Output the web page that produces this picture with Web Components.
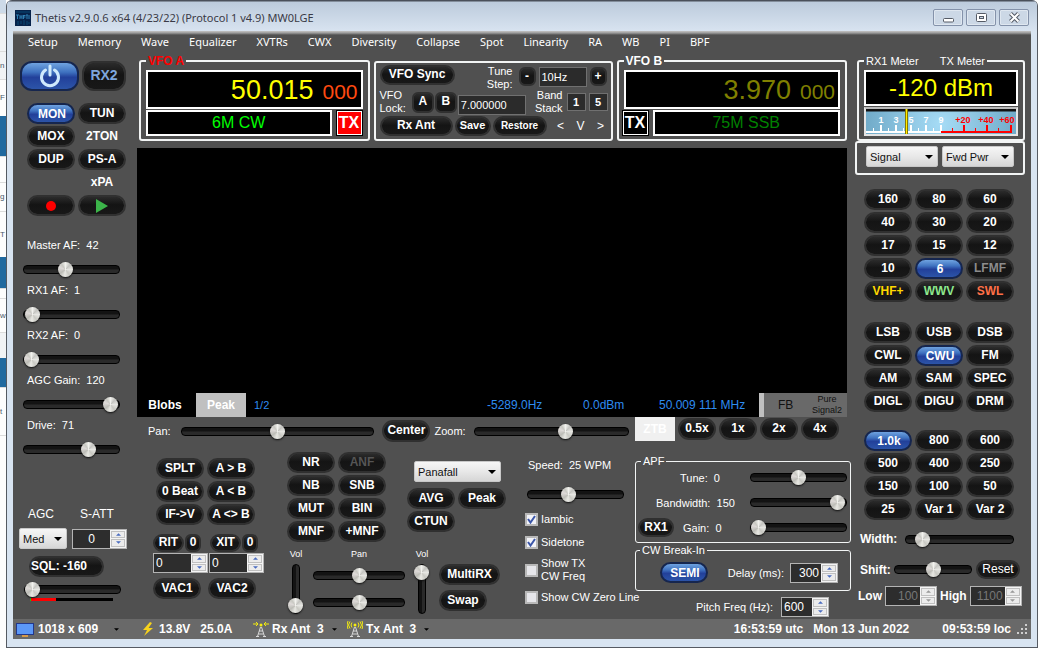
<!DOCTYPE html>
<html lang="en">
<head>
<meta charset="utf-8">
<title>Thetis v2.9.0.6 x64</title>
<style>
  html, body { margin: 0; }
  body { background: #fff; font-family: "Liberation Sans", Arial, sans-serif; font-size: 11px; }
</style>
</head>
<body>
<thetis-app></thetis-app>
<script>
const BASE = `
  *, *::before, *::after { box-sizing: border-box; }
  :host { box-sizing: border-box; display: block; color: #fff; }
  :host([hidden]) { display: none; }
  button, input, select { font: inherit; color: inherit; margin: 0; }
  .row { display: flex; align-items: center; }
`;
function define(name, css, markup) {
  customElements.define(name, class extends HTMLElement {
    constructor() {
      super();
      this.attachShadow({ mode: 'open' });
    }
    connectedCallback() {
      if (this.shadowRoot.childNodes.length) return;
      const t = document.createElement('template');
      t.innerHTML = `<style>${BASE}${css}</style>${markup(name => this.getAttribute(name) ?? '')}`;
      this.shadowRoot.append(t.content.cloneNode(true));
    }
  });
}

/* ---------- small controls ---------- */

define('pill-button', `
  :host { width: 48px; height: 21px; flex: none; font-weight: bold; font-size: 12px; }
  button { display: flex; align-items: center; justify-content: center; width: 100%; height: 100%;
    padding: 0 0 2px; border: 2px solid #303030; border-radius: 12px; white-space: nowrap;
    background: linear-gradient(#2b2b2b, #141414 45%, #181818); background-clip: padding-box; background-color: #141414; }
  :host([on]) button { padding: 0 0 0 2px; border: 2px solid #16264e;
    background: linear-gradient(#6fa3e0, #3f72c0 35%, #22409a 55%, #2c54a8); }
  :host([flat]) button { background: none; border-color: transparent; }
  :host([square]) button { border-radius: 6px; }
  :host([start]) button { justify-content: flex-start; }
`, a => `<button type="button"${a('label') ? ` aria-label="${a('label')}"` : ''}><slot></slot></button>`);

define('range-slider', `
  :host { height: 18px; width: 97px; flex: none; }
  input { appearance: none; -webkit-appearance: none; display: block; width: 100%; height: 100%; background: none; }
  input::-webkit-slider-runnable-track { height: 9px; border: 1px solid #000; border-radius: 4px;
    background: linear-gradient(#131313 45%, #2a2a2a 55%); }
  input::-webkit-slider-thumb { -webkit-appearance: none; width: 15px; height: 15px; margin-top: -4px; border-radius: 50%;
    background: conic-gradient(#f2f2ee, #c4c4c0 12%, #e6e6e2 25%, #c8c8c2 40%, #e9e9e4 52%, #bcbcb6 65%, #dedad8 80%, #c8c8c2 90%, #f2f2ee);
    box-shadow: 0 1px 2px #111; }
  :host([vertical]) { width: 16px; height: 50px; }
  :host([vertical]) input { writing-mode: vertical-lr; direction: rtl; }
  :host([vertical]) input::-webkit-slider-runnable-track { height: auto; width: 8px; background: linear-gradient(90deg, #131313 45%, #2a2a2a 55%); }
  :host([vertical]) input::-webkit-slider-thumb { margin-top: 0; margin-left: -5px; }
`, a => `<input type="range" min="0" max="100" value="${a('value')}" aria-label="${a('label')}">`);

define('labeled-slider', `
  :host { display: flex; flex-direction: column; gap: 8px; width: 97px; }
  label { height: 14px; line-height: 14px; padding-left: var(--indent, 4px); white-space: pre; }
`, a => `<label>${a('label')}  ${a('reading')}</label><range-slider label="${a('label')}" value="${a('value')}"></range-slider>`);

define('number-box', `
  :host { display: flex; height: 20px; width: 55px; flex: none; border: 1px solid #b4b4b4; background: #2d2d2d; font-size: 12px; }
  input { flex: 1; min-width: 0; border: 0; padding: 0 2px 0 2px; background: none; appearance: textfield; -moz-appearance: textfield; text-align: var(--align, left); }
  input::-webkit-inner-spin-button { -webkit-appearance: none; display: none; }
  .spin { display: grid; grid-template-rows: 1fr 1fr; gap: 1px; width: 16px; padding: 1px; background: #f4f4f4; }
  .spin button { display: flex; align-items: center; justify-content: center; border: 1px solid #c0c0c0; background: #ececec; padding: 0; min-height: 0; color: #4a6cc0; }
  :host([disabled]) input { color: #777; }
  :host([disabled]) .spin button { color: #999; }
  svg { display: block; width: 5px; height: 3px; fill: currentColor; }
`, a => `<input type="number" value="${a('value')}" aria-label="${a('label')}">
  <span class="spin"><button type="button" aria-label="Increase"><svg viewBox="0 0 6 3"><path d="M0 3 3 0l3 3z"/></svg></button>
  <button type="button" aria-label="Decrease"><svg viewBox="0 0 6 3"><path d="M0 0h6L3 3z"/></svg></button></span>`);

define('drop-select', `
  :host { position: relative; width: 72px; height: 21px; flex: none; color: #111; }
  select { appearance: none; -webkit-appearance: none; width: 100%; height: 100%; padding: 0 14px 0 3px; border: 1px solid #c8c8c8; border-radius: 2px;
    background: linear-gradient(#f6f6f6, #e8e8e8 50%, #d6d6d6); }
  svg { position: absolute; right: 5px; top: 9px; width: 8px; height: 4px; pointer-events: none; }
`, a => `<select aria-label="${a('label')}"><option>${a('value')}</option></select><svg viewBox="0 0 8 4"><path d="M0 0h8L4 4z"/></svg>`);

define('tick-box', `
  label { display: flex; align-items: center; gap: 3px; line-height: 13px; white-space: pre; }
  input { appearance: none; -webkit-appearance: none; flex: none; width: 13px; height: 13px; border: 2px solid #b8b8b8; outline: 0;
    background: #e6e6ea; }
  input:checked { background: #f2f3f8; }
  .box { position: relative; display: flex; }
  svg { position: absolute; inset: 2px; width: 9px; height: 9px; pointer-events: none; }
`, a => `<label><span class="box"><input type="checkbox"${a('ticked') ? ' checked' : ''}>${a('ticked')
    ? '<svg viewBox="0 0 9 9" fill="none" stroke="#3a55a8" stroke-width="2"><path d="M1 4l2.500 3.500L8 1"/></svg>' : ''}</span><slot></slot></label>`);

define('group-box', `
  fieldset { height: 100%; margin: 0; min-width: 0; padding: var(--pad, 3px 5px 3px); border: var(--bw, 2px) solid #f2f4f4; border-radius: 3px; }
  legend { height: 12px; line-height: 12px; margin-left: var(--lx, 0); padding: 0 2px; color: var(--lc, #fff); font-size: 11px; white-space: pre; }
  :host([strong]) legend { font-weight: bold; font-size: 12px; }
`, a => `<fieldset>${a('legend') ? `<legend>${a('legend')}</legend>` : ''}<slot></slot></fieldset>`);

/* ---------- window frame ---------- */

define('page-behind', `
  :host { display: flex; flex-direction: column; width: 6px; flex: none; background: #fdfdfd; font-size: 8px; color: #4a5a6a; }
  div { flex: none; display: flex; align-items: center; line-height: 12px; border-top: 1px solid #dcdcdc; }
  .head { background: #cddae8; border: 0; } .pale { background: #f1f3f5; } .bar { background: #20699f; color: #fff; border: 0; }
`, () => [['head', 13, ''], ['pale', 38, ''], ['pale', 28, 'n'], ['', 37, 'F'], ['bar', 40, ''], ['', 26, ''], ['', 29, 'g'],
    ['', 46, 'T'], ['bar', 31, ''], ['', 10, ''], ['', 34, 'w'], ['pale', 26, ''], ['bar', 29, ''], ['', 48, 't'], ['', 200, '']]
    .map(([c, h, t]) => `<div class="${c}" style="height:${h}px" aria-hidden="true">${t}</div>`).join(''));

define('title-bar', `
  :host { display: flex; align-items: center; height: 31px; padding: 4px 8px 0 8px; gap: 4px; font-size: 11px; color: #3a3a46; font-family: "Noto Sans", "Open Sans", sans-serif;
    background: linear-gradient(#4a505a 1px, #bccbdc 2px, #d8e3f0); }
  h1 { flex: 1; margin: 0; font: inherit; white-space: nowrap; }
  .icon { width: 16px; height: 16px; flex: none; }
  .buttons { display: flex; gap: 3px; }
  .buttons button { width: 30px; height: 17px; padding: 0; border: 1px solid #8492aa; border-radius: 2px; background: #ccd8e6; display: flex; align-items: center; justify-content: center; box-shadow: inset 0 0 0 1px #dfe7f0; }
  .buttons svg { width: 13px; height: 11px; }
`, () => `<svg class="icon" viewBox="0 0 16 16"><rect width="16" height="16" fill="#06224a"/>
    <g fill="none" stroke="#2f80b4"><path d="M1 5h3M2.500 5v4M5 5v4M7 5v4M5 7h2M8.500 5v4M8.500 5.500h2M8.500 7h2M11 5h2M12 5v4M14 5v4"/></g>
    <g fill="none" stroke="#0d5a86" stroke-width=".7"><path d="M1 2h14M3 11v4M6 11v3M9 10v5M12 11v4M14 12v2"/></g></svg>
  <h1>Thetis v2.9.0.6 x64 (4/23/22) (Protocol 1 v4.9) MW0LGE</h1>
  <div class="buttons">
    <button type="button" aria-label="Minimize"><svg viewBox="0 0 13 11"><rect x="1.500" y="6.500" width="10" height="3.500" rx="1" fill="#fff" stroke="#555b66"/></svg></button>
    <button type="button" aria-label="Maximize"><svg viewBox="0 0 13 11"><rect x="1.500" y="1.500" width="10" height="8" rx="1" fill="#fff" stroke="#555b66"/><rect x="4.500" y="4.500" width="4" height="2" fill="#ccd8e6" stroke="#555b66"/></svg></button>
    <button type="button" aria-label="Close"><svg viewBox="0 0 13 11"><path d="M2.500 1.500 10.500 9.500M10.500 1.500 2.500 9.500" stroke="#555b66" stroke-width="4"/><path d="M2.500 1.500 10.500 9.500M10.500 1.500 2.500 9.500" stroke="#fff" stroke-width="2"/></svg></button>
  </div>`);

define('menu-bar', `
  :host { background: linear-gradient(#c4c4c4, #9a9a9a 2px, #505050 4px); }
  nav { display: flex; gap: 20px; height: 22px; padding: 0 0 0 15px; align-items: center; font: 11px/22px "Noto Sans", "Open Sans", sans-serif; }
  a { color: #fff; text-decoration: none; white-space: nowrap; }
`, () => `<nav>${['Setup', 'Memory', 'Wave', 'Equalizer', 'XVTRs', 'CWX', 'Diversity', 'Collapse', 'Spot', 'Linearity', 'RA', 'WB', 'PI', 'BPF']
    .map(t => `<a href="#">${t}</a>`).join('')}</nav>`);

define('status-bar', `
  :host { display: flex; align-items: center; height: 20px; padding: 0 3px; background: #696969; font: bold 12px/20px "Liberation Sans", sans-serif; white-space: pre; }
  span { display: flex; align-items: center; }
  .fill { flex: 1; }
  svg { flex: none; }
  .size { width: 126px; gap: 4px; } .power { width: 111px; gap: 5px; } .ant { width: 94px; gap: 3px; }
  .caret { width: 5px; height: 3px; margin-left: 5px; }
  .size .caret { margin-left: 12px; }
  .clock { gap: 10px; }
  .local { gap: 6px; margin-left: 33px; }
`, () => {
    const caret = '<svg class="caret" viewBox="0 0 6 3"><path d="M0 0h6L3 3z"/></svg>';
    const mast = '<path d="M7.500 6 4.500 15.500M8.500 6l3 9.500M6 10h4M5.500 13h5M3 15.500h3M10 15.500h3" stroke="#d8d8d8" fill="none"/>';
    return `<span class="size"><svg width="18" height="15" viewBox="0 0 18 15"><rect x=".5" y="1.500" width="17" height="11" fill="#5c98f8" stroke="#23388c"/><path d="M6 14h6" stroke="#d69a4a" stroke-width="2"/></svg>1018 x 609${caret}</span>
    <span class="power"><svg width="12" height="14" viewBox="0 0 12 14"><path d="M8 0 1 8h4L2 14l9-8H6.500L10 1z" fill="#f6d21c"/></svg>13.8V   25.0A</span>
    <span class="ant"><svg width="16" height="16" viewBox="0 0 16 16">${mast}<path d="M0 3h5M3 1l2 2-2 2M16 3h-5M13 1l-2 2 2 2" stroke="#f4ec10" fill="none"/><circle cx="8" cy="4" r="1.500" fill="#f4ec10"/></svg>Rx Ant  3${caret}</span>
    <span class="ant"><svg width="16" height="16" viewBox="0 0 16 16">${mast}<path d="M5 1.500q-2 2.500 0 5M3 .5Q0 4 3 7.500M1 0Q-1 4 1 8M11 1.500q2 2.500 0 5M13 .5Q16 4 13 7.500M15 0q2 4 0 8" stroke="#f4ec10" fill="none"/><circle cx="8" cy="4" r="1.500" fill="#f4ec10"/></svg>Tx Ant  3${caret}</span>
    <span class="fill"></span>
    <span class="clock"><span>16:53:59 utc</span><span>Mon 13 Jun 2022</span></span>
    <span class="local">09:53:59 loc<svg width="11" height="12" viewBox="0 0 11 12"><path d="M8 1h2v2H8zM8 5h2v2H8zM8 9h2v2H8zM4 5h2v2H4zM4 9h2v2H4zM0 9h2v2H0z" fill="#cfcfcf"/></svg></span>`;
  });

/* ---------- panels ---------- */

define('audio-panel', `
  :host { display: flex; flex-direction: column; width: 124px; flex: none; padding: 8px 8px 0; }
  .top { display: flex; align-items: center; justify-content: space-between; padding: 0 3px 0 0; margin-left: -1px; }
  .grid { display: grid; grid-template-columns: 48px 48px; gap: 2px 3px; margin: 12px 0 0 6px; }
  .sliders { display: flex; flex-direction: column; gap: 5px; margin: 22px 0 0 2px; }
  .foot { margin-top: auto; padding-bottom: 18px; }
  .caps { display: flex; height: 14px; line-height: 14px; margin: 0 0 7px 7px; font-size: 12px; gap: 26px; }
  .sel { gap: 5px; margin-left: -2px; }
  .level { height: 3px; width: 83px; margin: 0 0 0 9px; background: linear-gradient(90deg, #1c1 1px, red 1px 26px, #000 26px); }
`, () => `<div class="top">
    <pill-button on label="Power" style="width:59px;height:30px"><svg width="24" height="24" viewBox="0 0 24 24" fill="none" stroke="#cfeafc" stroke-width="3" stroke-linecap="round" style="margin-right:2px"><path d="M7.500 6a8.500 8.500 0 1 0 9 0M12 2v9"/></svg></pill-button>
    <pill-button label="RX2" style="width:44px;height:30px;font-size:14px;color:#7ea6dc">RX2</pill-button></div>
  <div class="grid"><pill-button on>MON</pill-button><pill-button>TUN</pill-button><pill-button>MOX</pill-button><pill-button flat>2TON</pill-button>
    <pill-button>DUP</pill-button><pill-button>PS-A</pill-button><span></span><pill-button flat>xPA</pill-button>
    <pill-button label="Record"><svg width="12" height="12" style="margin-top:2px"><circle cx="6" cy="6" r="5" fill="red"/></svg></pill-button>
    <pill-button label="Play"><svg width="14" height="14" style="margin-top:2px"><path d="M1 0v14L13 7z" fill="#3cb44a"/></svg></pill-button></div>
  <div class="sliders">${[['Master AF:', '42', 42], ['RX1 AF:', '1', 1], ['RX2 AF:', '0', 0], ['AGC Gain:', '120', 99], ['Drive:', '71', 71]]
    .map(([l, r, v]) => `<labeled-slider label="${l}" reading="${r}" value="${v}"></labeled-slider>`).join('')}</div>
  <div class="foot">
    <div class="caps"><span>AGC</span><span>S-ATT</span></div>
    <div class="row sel"><drop-select label="AGC" value="Med" style="width:48px"></drop-select><number-box label="S-ATT" value="0" style="--align:center"></number-box></div>
    <pill-button start style="width:75px;margin:7px 0 3px 8px">SQL: -160</pill-button>
    <range-slider label="Squelch" value="0" style="margin:3px 0 0 3px"></range-slider><div class="level"></div>
  </div>`);

define('vfo-panel', `
  :host { flex: 1; min-width: 0; }
  .lcd { display: flex; align-items: center; background: #000; border: 2px solid #fff; }
  .freq { height: 39px; justify-content: flex-end; gap: 9px; font-size: 27px; line-height: 35px; color: var(--f); padding: 1px 3px 0 0; }
  .freq small { font-size: 21px; color: var(--k); padding-top: 2px; }
  .line { display: flex; gap: 4px; margin-top: 1px; }
  .mode { flex: 1; height: 26px; justify-content: center; font-size: 16px; color: var(--m); }
  .tx { width: 25px; height: 24px; margin: 1px; padding: 0; background: var(--t, #000); border: 1px solid #fff; outline: 1px solid #000; font: bold 16px/20px "Liberation Sans", sans-serif; color: #fff; }
  :host([mirrored]) .line { flex-direction: row-reverse; margin-left: -2px; }
`, a => `<group-box strong legend="${a('name')}" style="--lc:${a('name-color')}">
    <div class="lcd freq"><span>${a('mhz')}</span><small>${a('hz')}</small></div>
    <div class="line"><div class="lcd mode">${a('mode')}</div><button class="tx" type="button">TX</button></div></group-box>`);

define('sync-panel', `
  :host { width: 239px; flex: none; margin-top: 6px; }
  .line { display: flex; align-items: center; }
  .two { line-height: 13px; text-align: right; font-size: 11px; }
  .fill { flex: 1; }
  input { height: 20px; min-width: 0; padding: 0 2px; border: 1px solid #707070; background: #2b2b2b; font-size: 11px; }
  .sq { width: 19px; height: 18px; padding: 0; border: 1px solid #707070; background: #2b2b2b; font-weight: bold; }
  .nav { display: flex; gap: 10px; margin-left: 7px; }
  .nav button { width: 10px; padding: 0; border: 0; background: none; font-size: 12px; }
  .step { width: 17px; height: 19px; margin-top: 2px; }
  .a { height: 23px; align-items: flex-start; padding-right: 1px; } .b { height: 28px; } .c { height: 20px; gap: 2px; }
`, () => `<group-box style="height:80px;--pad:2px 3px 0 4px">
    <div class="line a"><pill-button style="width:75px;height:20px">VFO Sync</pill-button><span class="fill"></span><label for="step" class="two" style="margin-right:6px">Tune<br>Step:</label>
      <pill-button square class="step">-</pill-button><input id="step" value="10Hz" style="width:48px;margin:2px 3px 0 3px"><pill-button square class="step">+</pill-button></div>
    <div class="line b"><label for="lock" class="two" style="text-align:left;margin-right:6px">VFO<br>Lock:</label><pill-button square style="width:22px">A</pill-button><pill-button square style="width:22px;margin:0 1px">B</pill-button><input id="lock" value="7.000000" style="width:68px;margin-top:6px">
      <span class="fill"></span><span class="two">Band<br>Stack</span><button class="sq" type="button" style="margin:0 3px 0 4px">1</button><button class="sq" type="button">5</button></div>
    <div class="line c"><pill-button style="width:73px;height:20px">Rx Ant</pill-button><pill-button style="width:36px;height:20px;font-size:11px">Save</pill-button><pill-button style="width:54px;height:20px;font-size:10px">Restore</pill-button>
      <span class="nav"><button type="button">&lt;</button><button type="button">V</button><button type="button">&gt;</button></span></div></group-box>`);

define('pan-display', `
  :host { display: flex; flex-direction: column; justify-content: flex-end; flex: 1; min-height: 240px; background: #000; }
  .bar { display: flex; align-items: stretch; height: 24px; line-height: 24px; font-size: 12px; white-space: nowrap; }
  button { border: 0; padding: 0; background: none; font-weight: bold; }
  .blobs { width: 59px; padding-right: 3px; } .peak { width: 50px; background: #c0c0c0; }
  .data { color: #2e8cf0; } .fill { flex: 1; }
  .fb { width: 88px; display: flex; background: #696969; border-left: 5px solid #c0c0c0; color: #111; }
  .fb span { width: 44px; padding-left: 14px; } .fb small { width: 38px; font-size: 9px; line-height: 11px; text-align: center; white-space: pre-line; padding-top: 1px; }
`, () => `<div class="bar"><button class="blobs" type="button">Blobs</button><button class="peak" type="button">Peak</button>
    <span class="data" style="padding-left:8px;font-size:11px">1/2</span><span class="fill"></span>
    <span class="data" style="width:96px">-5289.0Hz</span><span class="data" style="width:76px">0.0dBm</span><span class="data" style="width:100px">50.009 111 MHz</span>
    <div class="fb"><span>FB</span><small>Pure
Signal2</small></div></div>`);

define('zoom-row', `
  :host { display: flex; align-items: center; height: 28px; padding-left: 11px; padding-right: 11px; }
  .wide { width: auto; min-width: 0; }
  .ztb { width: 40px; height: 24px; margin: 0 3px 4px 6px; padding: 0; border: 0; background: #f0f0f0; color: #fff; font-weight: bold; font-size: 12px; }
  .z { width: 38px; height: 22px; margin: 0 3px 4px 0; }
`, () => `<span style="width:33px">Pan:</span><range-slider class="wide" label="Pan" value="50" style="flex:194"></range-slider>
  <pill-button style="margin:0 4px 0 8px;height:22px">Center</pill-button><span style="width:40px">Zoom:</span>
  <range-slider class="wide" label="Zoom" value="60" style="flex:155"></range-slider><button class="ztb" type="button">ZTB</button>
  <pill-button class="z">0.5x</pill-button><pill-button class="z">1x</pill-button><pill-button class="z">2x</pill-button><pill-button class="z">4x</pill-button>`);

define('split-panel', `
  :host { width: 112px; flex: none; margin-top: 13px; }
  .grid { display: grid; grid-template-columns: 48px 48px; gap: 2px 3px; padding-left: 3px; }
  .rit { display: flex; gap: 1px; margin: 9px 0 1px; }
  .rit pill-button { height: 18px; }
  .rit .t { width: 31px; } .rit .o { width: 16px; } .rit .o + .t { margin-left: 8px; }
  .nums { display: flex; gap: 1px; margin-bottom: 5px; }
`, () => `<div class="grid"><pill-button>SPLT</pill-button><pill-button>A &gt; B</pill-button><pill-button>0 Beat</pill-button><pill-button>A &lt; B</pill-button><pill-button>IF-&gt;V</pill-button><pill-button>A &lt;&gt; B</pill-button></div>
  <div class="rit"><pill-button class="t">RIT</pill-button><pill-button class="o" square>0</pill-button><pill-button class="t">XIT</pill-button><pill-button class="o" square>0</pill-button></div>
  <div class="nums"><number-box label="RIT offset" value="0"></number-box><number-box label="XIT offset" value="0"></number-box></div>
  <div class="grid" style="padding:0;column-gap:7px"><pill-button>VAC1</pill-button><pill-button>VAC2</pill-button></div>`);

define('dsp-panel', `
  :host { width: 219px; flex: none; margin-top: 7px; }
  .top { display: flex; gap: 21px; }
  .grid { display: grid; grid-template-columns: 48px 48px; gap: 2px 3px; align-content: start; }
  .low { display: grid; grid-template-columns: 16px 92px 16px 61px; column-gap: 9px; margin: 6px 0 0 1px; }
  .cap { font-size: 9px; line-height: 12px; height: 16px; text-align: center; }
  .stack { display: flex; flex-direction: column; gap: 5px; }
  .stack range-slider { width: 92px; height: 22px; }
`, () => `<div class="top"><div class="grid"><pill-button>NR</pill-button><pill-button style="color:#555">ANF</pill-button><pill-button>NB</pill-button><pill-button>SNB</pill-button><pill-button>MUT</pill-button><pill-button>BIN</pill-button><pill-button>MNF</pill-button><pill-button>+MNF</pill-button></div>
    <div style="padding-top:9px"><drop-select label="Display mode" value="Panafall" style="width:87px;margin:0 0 6px 7px"></drop-select>
    <div class="grid"><pill-button>AVG</pill-button><pill-button>Peak</pill-button><pill-button>CTUN</pill-button></div></div></div>
  <div class="low"><span class="cap">Vol</span><span class="cap">Pan</span><span class="cap">Vol</span><span></span>
    <range-slider vertical label="Main volume" value="0"></range-slider>
    <div class="stack"><range-slider label="Main pan" value="50"></range-slider><range-slider label="Sub pan" value="50"></range-slider></div>
    <range-slider vertical label="Sub volume" value="100"></range-slider>
    <div class="stack"><pill-button style="width:61px">MultiRX</pill-button><pill-button>Swap</pill-button></div></div>`);

define('cw-panel', `
  :host { width: 97px; flex: none; margin-top: 13px; }
  .ticks { display: flex; flex-direction: column; margin: 10px 0 0 -2px; gap: 10px; }
`, () => `<labeled-slider label="Speed:" reading="25 WPM" value="41" style="gap:13px;--indent:1px"></labeled-slider>
  <div class="ticks"><tick-box ticked="1">Iambic</tick-box><tick-box ticked="1">Sidetone</tick-box><tick-box style="margin:-2px 0">Show TX
CW Freq</tick-box><tick-box>Show CW Zero Line</tick-box></div>`);

define('apf-panel', `
  :host { flex: 1; min-width: 0; margin-top: 10px; }
  .apf { display: grid; grid-template-columns: 36px 1fr 97px; align-items: center; grid-auto-rows: 25px; margin-top: -2px; }
  .apf label { white-space: pre; grid-column: 2; }
  .line { display: flex; align-items: center; justify-content: flex-end; gap: 6px; font-size: 11px; }
`, () => `<group-box legend="APF" style="height:88px;--bw:1px;--lx:3px;--pad:0 3px 0 2px"><div class="apf">
      <label style="padding-left:6px">Tune:  0</label><range-slider label="Tune" value="50"></range-slider>
      <label style="margin-left:-18px">Bandwidth:  150</label><range-slider label="Bandwidth" value="99"></range-slider>
      <pill-button style="width:36px;height:19px">RX1</pill-button><label style="padding-left:9px">Gain:  0</label><range-slider label="Gain" value="0"></range-slider></div></group-box>
  <group-box legend="CW Break-In" style="height:47px;margin-top:1px;--bw:1px;--lx:-20px;--pad:6px 12px 0 24px"><div class="line"><pill-button on>SEMI</pill-button><span style="flex:1"></span><span>Delay (ms):</span><number-box label="Delay" value="300" style="width:48px;--align:right"></number-box></div></group-box>
  <div class="line" style="margin:6px 22px 0 0;gap:8px"><span>Pitch Freq (Hz):</span><number-box label="Pitch" value="600" style="width:48px"></number-box></div>`);

define('s-meter', `
  :host { height: 29px; margin-top: 1px; border: 2px solid #e4e4e4; border-top-color: #bbb; background: radial-gradient(circle at 50% 60%, #a6dcf6, #70aac8); overflow: hidden; }
  svg { display: block; width: 100%; height: 25px; font: bold 9px "Liberation Sans", sans-serif; text-anchor: middle; }
`, () => {
    const white = [[15, '1'], [30, '3'], [45, '5'], [60, '7'], [75, '9']], red = [[97, '+20'], [120, '+40'], [141, '+60']];
    return `<svg viewBox="0 0 150 25" role="img" aria-label="Signal meter">
    <path d="M0 1h150" stroke="#111" stroke-width="3"/>
    <path d="M0 23h75M15 16v6M30 16v6M45 16v6M60 16v6M75 16v6" stroke="#fff" stroke-width="2"/><path d="M7.500 19v3M22.500 19v3M37.500 19v3M52.500 19v3M67.500 19v3" stroke="#fff"/>
    <path d="M75 23h71M98 16v6M121 16v6M145 16v6" stroke="#f00" stroke-width="2"/><path d="M86.500 19v3M109.500 19v3M132.500 19v3" stroke="#f00"/>
    <g fill="#fff">${white.map(([x, t]) => `<text x="${x}" y="14">${t}</text>`).join('')}</g>
    <g fill="#f00">${red.map(([x, t]) => `<text x="${x}" y="14">${t}</text>`).join('')}</g>
    <path d="M40.500 0v25" stroke="#8a7a00" stroke-width="3"/><path d="M40.500 0v25" stroke="#fe0"/></svg>`;
  });

define('rx-panel', `
  :host { display: flex; flex-direction: column; width: 178px; flex: none; padding: 2px 6px 0 2px; }
  .lcd { height: 36px; line-height: 32px; text-align: center; font-size: 24px; color: #ff0; background: #000; border: 2px solid #fff; }
  .grid { display: grid; grid-template-columns: repeat(3, 48px); gap: 2px 3px; margin-left: 9px; }
  .line { display: flex; align-items: center; margin-left: 5px; font-weight: bold; font-size: 12px; }
  .thin { font-weight: normal; }
`, () => {
    const pills = (list, top, on) => `<div class="grid" style="margin-top:${top}px">${list.map(t => {
      const [text, color] = t.split('|');
      return `<pill-button${text === on ? ' on' : ''}${color ? ` style="color:${color}"` : ''}>${text}</pill-button>`; }).join('')}</div>`;
    return `<group-box legend="RX1 Meter       TX Meter" style="margin-left:2px;height:86px"><div class="lcd">-120 dBm</div><s-meter></s-meter></group-box>
  <group-box style="height:34px;--pad:3px 7px 0 9px"><div class="row" style="gap:4px"><drop-select label="RX meter" value="Signal"></drop-select><drop-select label="TX meter" value="Fwd Pwr"></drop-select></div></group-box>
  ${pills(['160', '80', '60', '40', '30', '20', '17', '15', '12', '10', '6', 'LFMF|#8c8c8c', 'VHF+|#ffd800', 'WWV|#8ee88e', 'SWL|#ff7048'], 14, '6')}
  ${pills(['LSB', 'USB', 'DSB', 'CWL', 'CWU', 'FM', 'AM', 'SAM', 'SPEC', 'DIGL', 'DIGU', 'DRM'], 20, 'CWU')}
  ${pills(['1.0k', '800', '600', '500', '400', '250', '150', '100', '50', '25', 'Var 1', 'Var 2'], 18, '1.0k')}
  <div class="line" style="margin-top:10px"><span style="width:45px">Width:</span><range-slider label="Width" value="10" style="width:109px"></range-slider></div>
  <div class="line" style="margin-top:12px"><span style="width:34px">Shift:</span><range-slider label="Shift" value="50" style="width:78px;margin-right:4px"></range-slider><pill-button class="thin" style="width:44px;height:19px">Reset</pill-button></div>
  <div class="line thin" style="margin-top:7px;gap:3px;margin-left:3px;margin-right:-4px"><b>Low</b><number-box disabled label="Low" value="100" style="width:52px;--align:right"></number-box><b>High</b><number-box disabled label="High" value="1100" style="width:52px;--align:right"></number-box></div>`;
  });

define('thetis-app', `
  :host { display: flex; min-height: 100vh; background: #fff; }
  .window { display: flex; flex-direction: column; flex: 1; min-width: 0; margin-right: 1px; border: 1px solid #555a62; border-top: 0; border-radius: 6px 6px 0 0; overflow: hidden; background: #d8e4f1; }
  .client { display: flex; flex-direction: column; flex: 1; margin: 0 6px 8px; background: #505050; }
  .main { display: flex; flex: 1; }
  .center { display: flex; flex-direction: column; flex: 1; min-width: 0; }
  .vfos { display: flex; gap: 4px; padding: 2px 6px 7px 2px; }
  .low { display: flex; height: 174px; padding: 0 2px 0 16px; }
`, () => `<page-behind></page-behind>
  <div class="window"><title-bar></title-bar>
    <div class="client"><menu-bar></menu-bar>
      <main class="main"><audio-panel></audio-panel>
        <div class="center">
          <div class="vfos"><vfo-panel name="VFO A" name-color="#f00" mhz="50.015" hz="000" mode="6M CW" style="--f:#ff0;--k:#ff4a10;--m:#0f0;--t:#f00"></vfo-panel>
            <sync-panel></sync-panel>
            <vfo-panel mirrored name="VFO B" name-color="#fff" mhz="3.970" hz="000" mode="75M SSB" style="--f:#808000;--k:#808000;--m:#008000"></vfo-panel></div>
          <pan-display style="margin-right:6px"></pan-display>
          <zoom-row></zoom-row>
          <div class="low"><split-panel></split-panel><dsp-panel style="margin-left:22px"></dsp-panel><cw-panel style="margin-left:21px"></cw-panel><apf-panel style="margin-left:11px"></apf-panel></div>
        </div>
        <rx-panel></rx-panel></main>
      <status-bar></status-bar></div></div>`);
</script>
</body>
</html>
